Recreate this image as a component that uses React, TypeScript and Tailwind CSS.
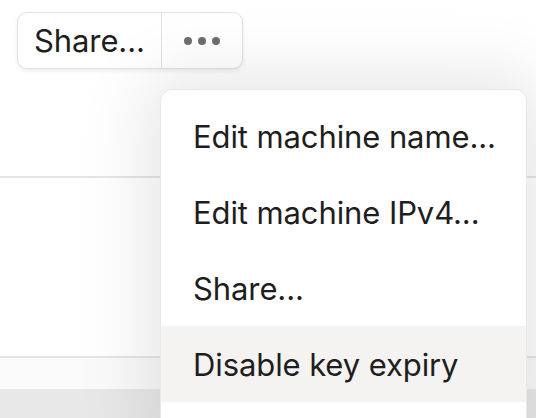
import React from "react";

const items = [
  "Edit machine name...",
  "Edit machine IPv4...",
  "Share...",
  "Disable key expiry",
];

export default function App() {
  return (
    <div
      className="relative w-[536px] h-[418px] overflow-hidden bg-white text-[#1f1e1e]"
      style={{ fontFamily: "Inter, 'Noto Sans', sans-serif" }}
    >
      {/* page behind the menu */}
      <div className="flex flex-col h-full">
        <div className="h-[176px] pt-[12px] pl-[17px]">
          <div className="inline-flex h-[57px] rounded-[10px] border border-[#e3e2e0] bg-white shadow-[0_2px_4px_rgba(0,0,0,0.08)]">
            <button className="px-[16px] text-[31px] leading-none tracking-[-0.1px] border-r border-[#e3e2e0]">
              Share...
            </button>
            <button className="w-[80px] flex items-center justify-center gap-[6px]">
              <span className="w-[8px] h-[8px] rounded-full bg-[#6f6e6d]" />
              <span className="w-[8px] h-[8px] rounded-full bg-[#6f6e6d]" />
              <span className="w-[8px] h-[8px] rounded-full bg-[#6f6e6d]" />
            </button>
          </div>
        </div>
        <div className="h-[2px] bg-[#e6e5e4]" />
        <div className="h-[178px]" />
        <div className="h-[2px] bg-[#e6e5e4]" />
        <div className="h-[31px] bg-[#fafafa]" />
        <div className="flex-1 bg-[#e8e8e8]" />
      </div>

      {/* dropdown menu */}
      <div className="absolute left-[160px] top-[89px] w-[367px] h-[360px] rounded-[12px] border border-[#e9e8e6] bg-white pt-[8px] shadow-[0_0_70px_14px_rgba(0,0,0,0.1)]">
        {items.map((label, i) => (
          <div
            key={label}
            className={
              "h-[76px] flex items-center pl-[32px] text-[31px] leading-none tracking-[-0.1px] " +
              (i === 3 ? "bg-[#f4f3f1]" : "")
            }
          >
            {label}
          </div>
        ))}
      </div>
    </div>
  );
}
